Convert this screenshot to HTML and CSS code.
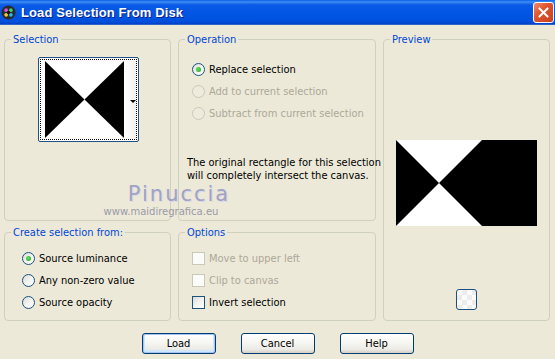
FILE: index.html
```html
<!DOCTYPE html>
<html lang="en">
<head>
  <meta charset="UTF-8">
  <title>Load Selection From Disk</title>
  <link rel="stylesheet" href="styles.css">
</head>
<body>
  <div class="window">
    <div class="titlebar">
      <svg class="app-icon" viewBox="0 0 16 16">
        <circle cx="8" cy="8" r="7.5" fill="#2a2a2a"/>
        <circle cx="5.5" cy="5.5" r="2" fill="#e04bd8"/>
        <circle cx="10.5" cy="5.5" r="2" fill="#3bd46a"/>
        <circle cx="10.5" cy="10.5" r="2" fill="#2fb7f0"/>
        <circle cx="5.5" cy="10.5" r="2" fill="#f0c93a"/>
        <circle cx="8" cy="8" r="1.8" fill="#111"/>
      </svg>
      <span class="title">Load Selection From Disk</span>
      <button class="close-btn" aria-label="Close">
        <svg viewBox="0 0 21 21"><path d="M6 6 L15 15 M15 6 L6 15" stroke="#fff" stroke-width="2.2" stroke-linecap="round"/></svg>
      </button>
    </div>

    <div class="content">
      <fieldset class="group">
        <legend>Selection</legend>
        <div class="thumb-wrap">
          <div class="thumb">
            <div class="thumb-focus">
              <svg class="thumb-img" viewBox="0 0 79 77" preserveAspectRatio="none">
                <rect width="79" height="77" fill="#fff"/>
                <polygon points="0,0 0,77 39.5,38.5" fill="#000"/>
                <polygon points="79,0 79,77 39.5,38.5" fill="#000"/>
              </svg>
              <div class="thumb-side"><span class="arrow"></span></div>
            </div>
          </div>
        </div>
      </fieldset>

      <fieldset class="group">
        <legend>Operation</legend>
        <div class="group-body op-body">
          <label class="row"><span class="radio checked"></span>Replace selection</label>
          <label class="row disabled"><span class="radio"></span>Add to current selection</label>
          <label class="row disabled"><span class="radio"></span>Subtract from current selection</label>
          <p class="note">The original rectangle for this selection<br>will completely intersect the canvas.</p>
        </div>
      </fieldset>

      <fieldset class="group preview">
        <legend>Preview</legend>
        <div class="preview-body">
          <svg class="preview-img" viewBox="0 0 141 86">
            <rect width="141" height="86" fill="#000"/>
            <polygon points="0,0 86,0 43,43" fill="#fff"/>
            <polygon points="0,86 86,86 43,43" fill="#fff"/>
          </svg>
          <button class="swatch" aria-label="Background"></button>
        </div>
      </fieldset>

      <fieldset class="group">
        <legend>Create selection from:</legend>
        <div class="group-body create-body">
          <label class="row"><span class="radio checked"></span>Source luminance</label>
          <label class="row"><span class="radio"></span>Any non-zero value</label>
          <label class="row"><span class="radio"></span>Source opacity</label>
        </div>
      </fieldset>

      <fieldset class="group">
        <legend>Options</legend>
        <div class="group-body opt-body">
          <label class="row disabled"><span class="check"></span>Move to upper left</label>
          <label class="row disabled"><span class="check"></span>Clip to canvas</label>
          <label class="row"><span class="check"></span>Invert selection</label>
        </div>
      </fieldset>
    </div>

    <div class="buttons">
      <button class="btn default">Load</button>
      <button class="btn">Cancel</button>
      <button class="btn">Help</button>
    </div>

    <div class="watermark">
      <span class="wm-name">Pinuccia</span>
      <span class="wm-url">www.maidiregrafica.eu</span>
    </div>
  </div>
</body>
</html>
```

FILE: styles.css
```css
* {
  margin: 0;
  padding: 0;
  box-sizing: border-box;
}

body {
  font-family: "DejaVu Sans Condensed", "Liberation Sans", sans-serif;
  font-size: 11px;
  color: #000;
  background: #ECE9D8;
}

.window {
  position: relative;
  width: 555px;
  height: 359px;
  background: #ECE9D8;
  overflow: hidden;
}

/* title bar */
.titlebar {
  height: 25px;
  display: flex;
  align-items: center;
  padding-left: 1px;
  background: linear-gradient(to bottom, #0a5fe8 0%, #3d8cf5 8%, #0a5ae6 20%, #0055e3 60%, #0050dc 90%, #003fc7 100%);
  border-bottom: 1px solid #2c63c9;
}

.app-icon {
  width: 15px;
  height: 15px;
  margin-top: 1px;
}

.title {
  margin-left: 5px;
  color: #fff;
  font-family: "Liberation Sans", sans-serif;
  font-weight: bold;
  font-size: 13px;
  letter-spacing: 0.1px;
  text-shadow: 1px 1px 0 #0a1e8a;
}

.close-btn {
  margin-left: auto;
  margin-right: 1px;
  width: 21px;
  height: 21px;
  border: 1px solid #fff;
  border-radius: 3px;
  background: linear-gradient(135deg, #f08a6a 0%, #e0552f 40%, #c8401e 100%);
  display: flex;
  align-items: center;
  justify-content: center;
}

.close-btn svg {
  width: 19px;
  height: 19px;
}

/* group boxes */
.content {
  display: grid;
  grid-template-columns: 167px 198px 167px;
  grid-template-rows: 188px 95px;
  column-gap: 7px;
  row-gap: 5px;
  padding: 8px 0 0 4px;
}

.group {
  min-width: 0;
  border: 1px solid #D0D0BF;
  border-radius: 4px;
  padding: 0 6px;
}

.group legend {
  color: #0046D5;
  padding: 0 2px;
  line-height: 13px;
}

.preview {
  grid-column: 3;
  grid-row: 1 / span 2;
}

.group-body {
  display: flex;
  flex-direction: column;
}

.row {
  height: 22px;
  display: flex;
  align-items: center;
  gap: 4px;
  white-space: nowrap;
}

.row.disabled {
  color: #ACA899;
}

.op-body {
  padding: 12px 0 0 7px;
}

.note {
  margin: 32px 0 0 -5px;
  line-height: 13px;
  white-space: nowrap;
}

.create-body {
  padding: 8px 0 0 11px;
}

.opt-body {
  padding: 8px 0 0 7px;
}

/* radios and checkboxes */
.radio {
  width: 13px;
  height: 13px;
  border: 1px solid #1C5180;
  border-radius: 50%;
  background: linear-gradient(135deg, #dcdcd7 0%, #f4f4f0 55%, #fff 100%);
  display: flex;
  align-items: center;
  justify-content: center;
}

.radio.checked::after {
  content: "";
  width: 5px;
  height: 5px;
  border-radius: 50%;
  background: radial-gradient(circle at 40% 40%, #5ee35e, #21A121);
}

.disabled .radio {
  border-color: #CAC8BB;
  background: #EEEBDD;
}

.check {
  width: 13px;
  height: 13px;
  border: 1px solid #1C5180;
  background: linear-gradient(135deg, #dcdcd7 0%, #f4f4f0 55%, #fff 100%);
}

.disabled .check {
  border-color: #CAC8BB;
  background: #fbfbf8;
}

/* selection thumbnail */
.thumb-wrap {
  display: flex;
  justify-content: center;
  padding: 11px 0 0 1px;
}

.thumb {
  width: 101px;
  height: 85px;
  border: 1px solid #1C5180;
  border-radius: 2px;
  padding: 1px;
  background: #fff;
}

.thumb-focus {
  height: 100%;
  border: 1px dotted #000;
  display: flex;
  padding: 1px 0 0 4px;
}

.thumb-img {
  width: 79px;
  height: 77px;
}

.thumb-side {
  flex: 1;
  display: flex;
  align-items: center;
  justify-content: flex-end;
  background: linear-gradient(to right, #fff, #f1f1ee);
}

.arrow {
  width: 0;
  height: 0;
  border-left: 3px solid transparent;
  border-right: 3px solid transparent;
  border-top: 3px solid #000;
  margin-top: 2px;
}

/* preview */
.preview-body {
  display: flex;
  flex-direction: column;
  align-items: center;
  padding-top: 94px;
}

.preview-img {
  width: 141px;
  height: 86px;
  display: block;
}

.swatch {
  margin-top: 63px;
  width: 21px;
  height: 21px;
  border: 1px solid #1C5180;
  border-radius: 3px;
  background-color: #fbfbfb;
  background-image: repeating-conic-gradient(#ececec 0 25%, #fbfbfb 0 50%);
  background-size: 10px 10px;
}

/* dialog buttons */
.buttons {
  display: flex;
  justify-content: center;
  gap: 25px;
  margin-top: 12px;
}

.btn {
  width: 74px;
  height: 21px;
  font-family: inherit;
  font-size: 11px;
  color: #000;
  border: 1px solid #003C74;
  border-radius: 3px;
  background: linear-gradient(to bottom, #fff 0%, #f7f7f4 40%, #ecebe6 80%, #d6d0c5 100%);
}

.btn.default {
  box-shadow: inset 0 0 0 1px #a6c4f2, inset 0 -1px 0 2px #cee7ff;
}

/* watermark */
.watermark {
  position: absolute;
  left: 100px;
  top: 183px;
  display: flex;
  flex-direction: column;
  align-items: center;
  width: 122px;
  color: #a2a2c4;
  font-family: "DejaVu Sans", sans-serif;
  pointer-events: none;
}

.wm-name {
  font-size: 21px;
  line-height: 23px;
  letter-spacing: 2px;
  padding-left: 36px;
  text-shadow: 1px 1px 0 #d8d8e6;
}

.wm-url {
  font-size: 10px;
  line-height: 12px;
  color: #9a9aa8;
}
```
